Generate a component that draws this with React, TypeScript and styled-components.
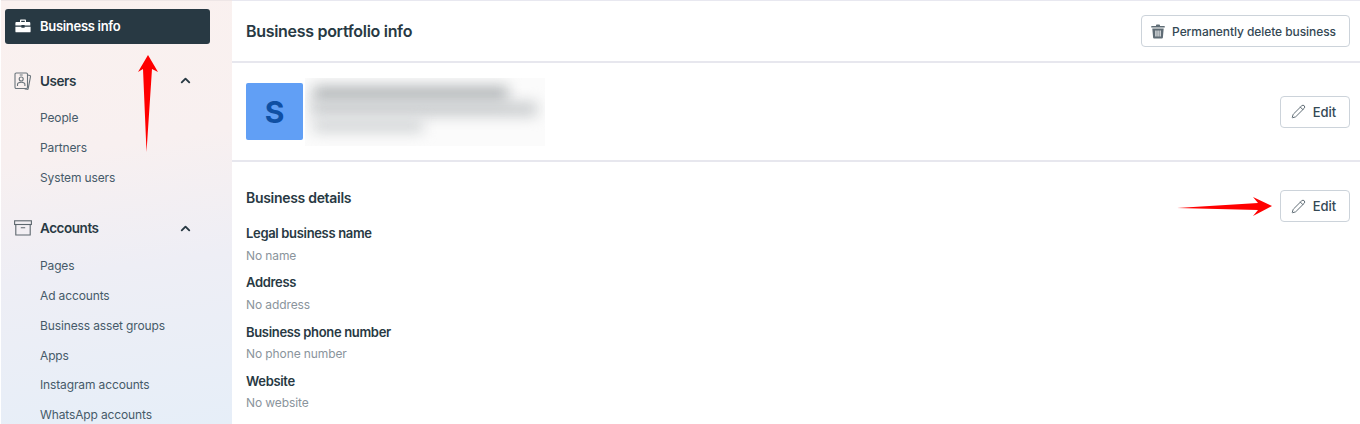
import styled, {createGlobalStyle} from 'styled-components';
import {ChevronUp, Pencil} from 'lucide-react';

const GlobalStyle = createGlobalStyle`
  html, body {
    margin: 0;
    padding: 0;
    height: 424px;
    overflow: hidden;
    background: #fff;
    font-family: Inter, "Noto Sans", "Liberation Sans", sans-serif;
  }
`;

const Page = styled.div`
  position: relative;
  display: flex;
  width: 1360px;
  height: 424px;
  overflow: hidden;
  color: #1c2b33;
`;

const Sidebar = styled.aside`
  width: 231px;
  margin-left: 1px;
  height: 424px;
  flex-shrink: 0;
  padding: 8px 22px 0 4px;
  box-sizing: border-box;
  overflow: hidden;
  border-top: 1px solid #eee6e6;
  background: linear-gradient(172deg, #faf1ef 0%, #f8f0f0 35%, #eeeef5 62%, #e6eef8 100%);
`;

const ActiveItem = styled.div`
  display: flex;
  align-items: center;
  gap: 9px;
  height: 35px;
  padding: 0 0 2px 10px;
  box-sizing: border-box;
  border-radius: 3px;
  background: #283943;
  color: #fff;
  font-size: 13px;
  font-weight: 600;
  letter-spacing: -0.3px;
`;

const Group = styled.section`
  margin-top: 24px;

  & + & {
    margin-top: 23px;
  }
`;

const GroupHead = styled.div`
  display: flex;
  align-items: center;
  gap: 8px;
  height: 25px;
  padding: 0 17px 0 9px;
  font-size: 13.5px;
  font-weight: 600;
  letter-spacing: -0.45px;
  color: #283943;

  span {
    flex: 1;
  }
`;

const SubItem = styled.div`
  height: 29.8px;
  line-height: 30px;
  padding-left: 35px;
  font-size: 12px;
  letter-spacing: -0.13px;
  color: #465a69;
  white-space: nowrap;

  ${GroupHead} + & {
    margin-top: 10.4px;
  }
`;

const Main = styled.main`
  flex: 1;
  min-width: 0;
  background: #fff;
  border-top: 1px solid #e8e8f0;
`;

const HeaderRow = styled.header`
  display: flex;
  align-items: center;
  justify-content: space-between;
  height: 60px;
  padding: 0 10px 0 14px;
  border-bottom: 2px solid #e7e7ee;
`;

const Title = styled.h1`
  margin: 0;
  font-size: 16px;
  font-weight: 600;
  letter-spacing: -0.3px;
  color: #283943;
`;

const Button = styled.button`
  display: inline-flex;
  align-items: center;
  gap: 7px;
  height: 32px;
  padding: 0 13px 0 9px;
  background: #fff;
  border: 1px solid #ccd3da;
  border-radius: 4px;
  font-family: inherit;
  font-size: 12px;
  font-weight: 500;
  letter-spacing: -0.07px;
  color: #344854;
  white-space: nowrap;
  box-sizing: border-box;
`;

const EditButton = styled(Button)`
  padding-left: 10px;
  font-size: 13px;
`;

const ProfileRow = styled.div`
  display: flex;
  align-items: center;
  justify-content: space-between;
  height: 97px;
  padding: 0 10px 0 14px;
  border-bottom: 2px solid #e7e7ee;
`;

const Identity = styled.div`
  display: flex;
  align-items: center;
  gap: 2px;
`;

const Avatar = styled.div`
  display: flex;
  align-items: center;
  justify-content: center;
  width: 57px;
  height: 57px;
  border-radius: 2px;
  background: #619ff5;
  color: #0f4fa3;
  font-size: 30px;
  font-weight: 700;
`;

const BlurPatch = styled.div`
  position: relative;
  width: 240px;
  height: 68px;
  overflow: hidden;
  background: #fbfbfb;
`;

const BlurBar = styled.div<{$top: number; $left: number; $width: number; $height: number; $tone: string}>`
  position: absolute;
  top: ${(p) => p.$top}px;
  left: ${(p) => p.$left}px;
  width: ${(p) => p.$width}px;
  height: ${(p) => p.$height}px;
  background: ${(p) => p.$tone};
  filter: blur(7px);
`;

const Details = styled.div`
  display: flex;
  justify-content: space-between;
  padding: 26px 10px 0 14px;
`;

const DetailsText = styled.div`
  display: flex;
  flex-direction: column;
`;

const SectionTitle = styled.h2`
  margin: 0 0 15px;
  font-size: 14px;
  line-height: 20px;
  font-weight: 600;
  letter-spacing: -0.3px;
  color: #283943;
`;

const FieldLabel = styled.div`
  font-size: 13px;
  line-height: 20px;
  font-weight: 600;
  letter-spacing: -0.33px;
  color: #283943;
`;

const FieldValue = styled.div`
  margin: 2.5px 0 6.8px;
  font-size: 12px;
  line-height: 20px;
  letter-spacing: -0.1px;
  color: #8a949c;
`;

const ButtonColumn = styled.div`
  padding-top: 2px;
`;

const Arrows = styled.svg`
  position: absolute;
  inset: 0;
  pointer-events: none;
`;

const fields = [
  ['Legal business name', 'No name'],
  ['Address', 'No address'],
  ['Business phone number', 'No phone number'],
  ['Website', 'No website'],
];

function BriefcaseIcon() {
  return (
    <svg width="16" height="14" viewBox="0 0 16 14">
      <path
        fill="#fff"
        d="M5 3V1.600C5 1 5.400.6 6 .6h4c.6 0 1 .4 1 1V3h3.400c.5 0 .9.4.9.9V6.600H9.600V6H6.400v.6H.4V3.900c0-.5.4-.9.9-.9zM6.200 3h3.600V1.800H6.200zM.4 7.800h6v.9h3.200v-.9h6v4.600c0 .5-.4.9-.9.9H1.300c-.5 0-.9-.4-.9-.9z"
      />
    </svg>
  );
}

function BadgeIcon() {
  return (
    <svg width="18" height="18" viewBox="0 0 18 18" fill="none" stroke="#6b757c" strokeWidth="1.100">
      <rect x="1" y="1" width="12.500" height="15.500" rx="1.200" />
      <path d="M13.500 3l2.300.5c.5.1.8.6.7 1.100l-2.300 12c-.1.500-.5.800-1 .700l-2.500-.4" />
      <circle cx="7.200" cy="7" r="2" />
      <path d="M3.500 14v-1.500c0-1.400 1.300-2.300 3.700-2.300s3.700.9 3.700 2.300V14M5.700 3h3" />
    </svg>
  );
}

function ArchiveIcon() {
  return (
    <svg width="18" height="16" viewBox="0 0 18 16" fill="none" stroke="#5d676e" strokeWidth="1.100">
      <rect x=".6" y=".8" width="16.800" height="3.700" />
      <path d="M1.800 4.500V15h14.400V4.500M6.800 7.800h4.400" />
    </svg>
  );
}

function TrashIcon() {
  return (
    <svg width="14" height="15" viewBox="0 0 14 15">
      <path
        fill="#5f6c75"
        d="M5 1.400C5 .8 5.500.4 6 .4h2c.5 0 1 .4 1 1V2h4.300c.3 0 .5.200.5.500V3.600H.2V2.500C.2 2.200.4 2 .7 2H5zM1.300 4.600h11.400l-.8 8.900c-.1.700-.6 1.100-1.200 1.100H3.300c-.6 0-1.100-.4-1.200-1.100zM4.400 6.500v6h1.100v-6zm2.100 0v6h1.100v-6zm2.100 0v6h1.100v-6z"
      />
    </svg>
  );
}

export default function App() {
  return (
    <Page>
      <GlobalStyle />
      <Sidebar>
        <ActiveItem>
          <BriefcaseIcon />
          Business info
        </ActiveItem>
        <Group>
          <GroupHead>
            <BadgeIcon />
            <span>Users</span>
            <ChevronUp size={15} strokeWidth={3} color="#283943" />
          </GroupHead>
          <SubItem>People</SubItem>
          <SubItem>Partners</SubItem>
          <SubItem>System users</SubItem>
        </Group>
        <Group>
          <GroupHead>
            <ArchiveIcon />
            <span>Accounts</span>
            <ChevronUp size={15} strokeWidth={3} color="#283943" />
          </GroupHead>
          <SubItem>Pages</SubItem>
          <SubItem>Ad accounts</SubItem>
          <SubItem>Business asset groups</SubItem>
          <SubItem>Apps</SubItem>
          <SubItem>Instagram accounts</SubItem>
          <SubItem>WhatsApp accounts</SubItem>
        </Group>
      </Sidebar>
      <Main>
        <HeaderRow>
          <Title>Business portfolio info</Title>
          <Button>
            <TrashIcon />
            Permanently delete business
          </Button>
        </HeaderRow>
        <ProfileRow>
          <Identity>
            <Avatar>S</Avatar>
            <BlurPatch>
              <BlurBar $top={8} $left={8} $width={195} $height={16} $tone="#b4b8ba" />
              <BlurBar $top={24} $left={6} $width={226} $height={14} $tone="#c8cbcd" />
              <BlurBar $top={42} $left={8} $width={110} $height={12} $tone="#cfd2d4" />
            </BlurPatch>
          </Identity>
          <EditButton>
            <Pencil size={15} strokeWidth={1.6} color="#5f6c75" />
            Edit
          </EditButton>
        </ProfileRow>
        <Details>
          <DetailsText>
            <SectionTitle>Business details</SectionTitle>
            {fields.map(([label, value]) => (
              <div key={label}>
                <FieldLabel>{label}</FieldLabel>
                <FieldValue>{value}</FieldValue>
              </div>
            ))}
          </DetailsText>
          <ButtonColumn>
            <EditButton>
              <Pencil size={15} strokeWidth={1.6} color="#5f6c75" />
              Edit
            </EditButton>
          </ButtonColumn>
        </Details>
      </Main>
      <Arrows width="1360" height="424" viewBox="0 0 1360 424">
        <path fill="#ff0000" d="M148 55L158 72 152 69 146.500 152 143 69 138 72z" />
        <path fill="#ff0000" d="M1177 208L1258 203 1253 197 1272 206 1253 216 1258 210z" />
      </Arrows>
    </Page>
  );
}
